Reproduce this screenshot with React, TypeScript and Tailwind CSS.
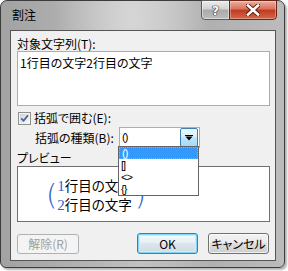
const jp = "font-['Noto_Sans_CJK_JP',sans-serif] [font-feature-settings:'palt']";

function CheckBox() {
  return (
    <span className="flex h-[13px] w-[13px] items-center justify-center border border-[#8e8f8f] bg-[#f4f4f4]">
      <span className="flex h-[9px] w-[9px] items-center justify-center bg-[linear-gradient(135deg,#cfd3d8,#f6f7f8)]">
        <svg width="9" height="9" viewBox="0 0 9 9">
          <path d="M1.2 4.3 L3.6 6.8 L8 1.2" fill="none" stroke="#4b5e8c" strokeWidth="1.7" />
        </svg>
      </span>
    </span>
  );
}

function TitleButtons() {
  return (
    <div className="-mt-px mr-[7px] flex">
      <div className="flex h-[20px] w-[29px] items-center justify-center rounded-bl-[4px] border border-[#5c5c5c] bg-[linear-gradient(180deg,#ececec_0%,#d2d2d2_45%,#a9a9a9_50%,#bdbdbd_100%)] shadow-[inset_0_0_0_1px_#ffffff70]">
        <span className="font-['DejaVu_Sans',sans-serif] text-[13px] font-bold leading-none text-white [text-shadow:0_0_1px_#222,0_0_1px_#222,0_0_1px_#222]">
          ?
        </span>
      </div>
      <div className="-ml-px flex h-[20px] w-[48px] items-center justify-center rounded-br-[4px] border border-[#6b2418] bg-[linear-gradient(180deg,#eab0a0_0%,#d9705a_45%,#c0391f_50%,#d4694a_100%)] shadow-[inset_0_0_0_1px_#ffffff50]">
        <svg width="14" height="12" viewBox="0 0 14 12">
          <path d="M2 1.5 L12 10.5 M12 1.5 L2 10.5" stroke="#5a1a10" strokeWidth="4.4" strokeLinecap="square" />
          <path d="M2 1.5 L12 10.5 M12 1.5 L2 10.5" stroke="#ffffff" strokeWidth="2.6" strokeLinecap="square" />
        </svg>
      </div>
    </div>
  );
}

const items = [
  { t: "()", sel: true },
  { t: "[]", sel: false },
  { t: "<>", sel: false },
  { t: "{}", sel: false },
];

export default function App() {
  return (
    <div className={`h-[271px] w-[288px] bg-white text-[12px] text-black ${jp}`}>
      <div className="flex h-[268px] w-[285px] flex-col rounded-t-[7px] rounded-b-[6px] border border-[#3c3c3c] bg-[image:radial-gradient(ellipse_at_46%_6%,#d6d6d6_0%,#d6d6d600_35%),linear-gradient(90deg,#a2a2a2_0%,#b6b6b6_35%,#c2c2c2_50%,#b0b0b0_75%,#bcbcbc_100%)] shadow-[2px_2px_2px_rgba(0,0,0,0.3)]">
        <div className="flex h-[29px] items-start justify-between">
          <span className="ml-[11px] mt-[7px] leading-[14px]">割注</span>
          <TitleButtons />
        </div>

        <div className="relative mb-[6px] ml-[9px] mr-[8px] flex flex-1 flex-col border border-[#555] bg-[#f0f0f0] px-[6px] pt-[6px]">
          <span className="leading-[14px]">対象文字列(T):</span>
          <div className="mr-[-1px] h-[55px] border border-[#abadb3] bg-white px-[2px] pt-[4px] leading-[14px]">
            1行目の文字2行目の文字
          </div>

          <div className="mt-[5px] flex h-[14px] items-center gap-[3px] pl-[1px]">
            <CheckBox />
            <span className="leading-[14px]">括弧で囲む(E):</span>
          </div>

          <div className="mt-[2px] flex h-[21px] items-center">
            <span className="ml-[18px] w-[84px] leading-[14px]">括弧の種類(B):</span>
            <div className="flex h-[21px] w-[81px] items-center border border-[#abadb3] bg-white pl-[2px] pr-px">
              <span className="flex-1 font-['Liberation_Sans',sans-serif] text-[11px] tracking-[-1px]">()</span>
              <div className="flex h-[19px] w-[18px] items-center justify-center rounded-[2px] border border-[#3c7fb1] bg-[linear-gradient(180deg,#eaf6fd_0%,#d9f0fc_45%,#bee6fd_50%,#a7d9f5_100%)]">
                <svg width="8" height="6" viewBox="0 0 8 6">
                  <rect x="0" y="0" width="8" height="1" fill="#000" />
                  <path d="M0.5 1.5 L7.5 1.5 L4 5.5 Z" fill="#000" />
                </svg>
              </div>
            </div>
          </div>

          <span className="mt-[3px] leading-[14px]">プレビュー</span>
          <div className="mr-[-1px] mt-px flex h-[56px] items-center border border-[#707070] bg-white pl-[28px] pt-[2px]">
            <span className="font-['DejaVu_Sans',sans-serif] text-[29px] font-extralight leading-none text-[#3563c9]">(</span>
            <div className="flex flex-col text-[13.5px] leading-[18px]">
              <span>
                <span className="font-['Liberation_Serif',serif] text-[15px] text-[#2b5fd6]">1</span>行目の文字
              </span>
              <span>
                <span className="font-['Liberation_Serif',serif] text-[15px] text-[#2b5fd6]">2</span>行目の文字
              </span>
            </div>
            <span className="ml-[3px] font-['DejaVu_Sans',sans-serif] text-[29px] font-extralight leading-none text-[#3563c9]">)</span>
          </div>

          <div className="mt-[11px] flex items-center">
            <button className="h-[20px] w-[62px] rounded-[3px] border border-[#adb2b5] bg-[#f4f4f4] leading-[14px] text-[#a0a0a0]">
              解除(R)
            </button>
            <button className="ml-[58px] h-[21px] w-[61px] rounded-[3px] border border-[#3c7fb1] bg-[linear-gradient(180deg,#f4f9fc_0%,#e8f0f5_45%,#dce6ec_50%,#cfdae2_100%)] leading-[14px] shadow-[inset_0_0_0_1px_#7fd4f7,inset_0_0_0_2px_#c8ecfb]">
              OK
            </button>
            <button className="ml-[10px] h-[21px] w-[61px] rounded-[3px] border border-[#707070] bg-[linear-gradient(180deg,#f2f2f2_0%,#ebebeb_45%,#dddddd_50%,#cfcfcf_100%)] leading-[14px] shadow-[inset_0_0_0_1px_#ffffffb0]">
              キャンセル
            </button>
          </div>

          <div className="absolute left-[107px] top-[115px] flex w-[81px] flex-col border border-[#646464] bg-white">
            {items.map((it) => (
              <div
                key={it.t}
                className={`flex h-[12px] items-center pl-[2px] font-['Liberation_Sans',sans-serif] text-[11px] leading-none tracking-[-1px] ${
                  it.sel ? "border border-dotted border-[#e0a060] bg-[#3399ff] text-white" : ""
                }`}
              >
                {it.t}
              </div>
            ))}
          </div>
        </div>
      </div>
    </div>
  );
}
